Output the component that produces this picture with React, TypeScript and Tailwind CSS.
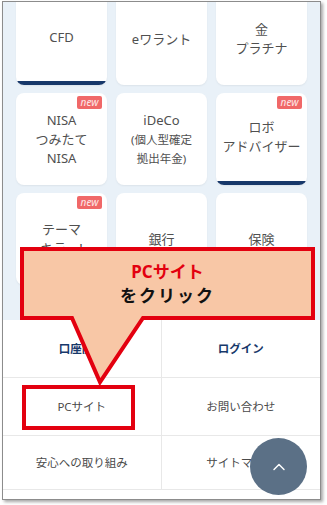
import { ChevronUp } from "lucide-react";

type Card = {
  lines: string[];
  sub?: string[];
  isNew?: boolean;
  active?: boolean;
};

const cards: Card[] = [
  { lines: ["CFD"], active: true },
  { lines: ["eワラント"] },
  { lines: ["金", "プラチナ"] },
  { lines: ["NISA", "つみたて", "NISA"], isNew: true },
  { lines: ["iDeCo"], sub: ["(個人型確定", "拠出年金)"] },
  { lines: ["ロボ", "アドバイザー"], isNew: true, active: true },
  { lines: ["テーマ", "キラー!"], isNew: true },
  { lines: ["銀行"] },
  { lines: ["保険"] },
];

const links = [
  { label: "口座開設", strong: true },
  { label: "ログイン", strong: true },
  { label: "PCサイト" },
  { label: "お問い合わせ" },
  { label: "安心への取り組み" },
  { label: "サイトマップ" },
];

const font = { fontFamily: '"Noto Sans", "Noto Sans CJK JP", sans-serif' };

function MenuCard({ card }: { card: Card }) {
  return (
    <div className="relative h-[92px] rounded-lg bg-white shadow-[0_1px_2px_rgba(0,0,0,0.06)] overflow-hidden flex flex-col">
      {card.isNew && (
        <span className="absolute right-[5px] top-[3px] h-[13px] w-[25px] rounded-[2px] bg-[#f06868] text-[#fde8e8] text-[10px] italic leading-[13px] text-center">
          new
        </span>
      )}
      <div className="flex-1 flex flex-col items-center justify-center text-[#505050] text-[13px] leading-[19px] text-center">
        {card.lines.map((l, i) => (
          <span key={i}>{l}</span>
        ))}
        {card.sub &&
          card.sub.map((l, i) => (
            <span key={"s" + i} className="text-[11.5px] leading-[19px]">
              {l}
            </span>
          ))}
      </div>
      {card.active && <div className="h-[4px] bg-[#17386a]" />}
    </div>
  );
}

export default function App() {
  return (
    <div className="relative w-[327px] h-[505px] bg-white pl-[2px] pt-[1px] overflow-hidden" style={font}>
      <div className="w-[319px] h-[499px] border border-[#8c8c8c] shadow-[2px_2px_3px_rgba(0,0,0,0.35)] overflow-hidden flex flex-col">
        {/* カード一覧 */}
        <div className="h-[318px] shrink-0 bg-[#e9f1f8] px-[13px] overflow-hidden">
          <div className="mt-[-9px] grid grid-cols-3 gap-x-[9px] gap-y-[8px]">
            {cards.map((c, i) => (
              <MenuCard key={i} card={c} />
            ))}
          </div>
        </div>

        {/* フッターリンク */}
        <div className="grid grid-cols-2 bg-white">
          {links.map((l, i) => (
            <div
              key={l.label}
              className={
                "flex items-center justify-center border-b border-[#e8e8e8] text-[11.5px] " +
                (i >= 4 ? "h-[54px] " : "h-[58px] ") +
                (i % 2 === 0 ? "border-r " : "") +
                (l.strong ? "font-bold text-[#17386a]" : "text-[#4a4a4a]")
              }
            >
              {l.label}
            </div>
          ))}
        </div>
      </div>

      {/* 吹き出し */}
      <svg className="absolute left-0 top-0" width="327" height="505" viewBox="0 0 327 505">
        <polygon
          points="22,249 313,249 313,318 143,318 100,382 72,318 22,318"
          fill="#f8c7a6"
          stroke="#e3000f"
          strokeWidth="4"
          strokeLinejoin="miter"
        />
      </svg>
      <div className="absolute left-[22px] top-[249px] w-[291px] h-[69px] flex flex-col items-center justify-center font-bold text-[17px] leading-[24px]">
        <span className="text-[#e3000f]">PCサイト</span>
        <span className="text-[#111] tracking-[2px]">をクリック</span>
      </div>

      {/* PCサイト枠 */}
      <div className="absolute left-[22px] top-[385px] w-[113px] h-[45px] border-[4px] border-[#e3000f]" />

      {/* ページトップ */}
      <div className="absolute left-[250px] top-[438px] w-[57px] h-[57px] rounded-full bg-[#5b7086] flex items-center justify-center">
        <ChevronUp className="w-[20px] h-[20px] text-white" strokeWidth={1.75} />
      </div>
    </div>
  );
}
